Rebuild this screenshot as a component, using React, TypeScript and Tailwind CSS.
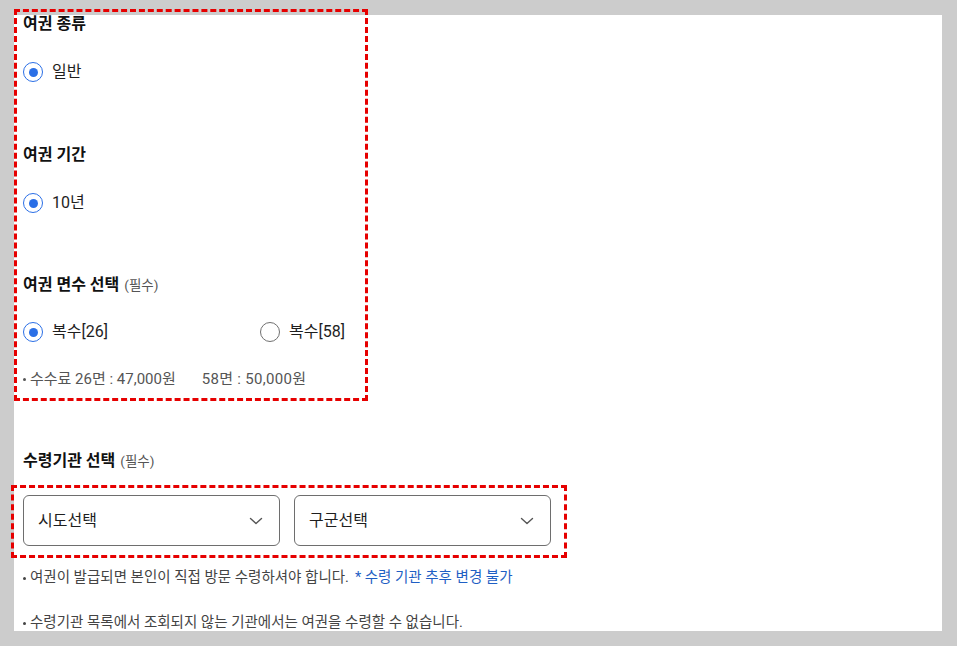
import React from "react";

function Radio({ checked, label }: { checked: boolean; label: string }) {
  return (
    <div className="flex h-[24px] items-center">
      {checked ? (
        <span className="flex h-[20px] w-[20px] items-center justify-center rounded-full border-[1.5px] border-[#2b6fe6] bg-white">
          <span className="h-[9px] w-[9px] rounded-full bg-[#2b6fe6]" />
        </span>
      ) : (
        <span className="h-[20px] w-[20px] rounded-full border-[1.5px] border-[#707070] bg-white" />
      )}
      <span className="ml-[9px] text-[16px] leading-[24px] text-[#1e1e1e]">{label}</span>
    </div>
  );
}

function Heading({ text, required }: { text: string; required?: boolean }) {
  return (
    <div className="flex h-[18px] items-center">
      <span className="text-[16px] font-bold leading-[22px] text-[#111]">{text}</span>
      {required && <span className="ml-[5px] text-[13.5px] leading-[22px] text-[#555]">(필수)</span>}
    </div>
  );
}

function Select({ label }: { label: string }) {
  return (
    <div className="flex h-[51px] w-[257px] items-center justify-between rounded-[6px] border border-[#6e6e6e] bg-white pl-[14px] pr-[16px]">
      <span className="text-[16px] text-[#1e1e1e]">{label}</span>
      <svg width="14" height="8" viewBox="0 0 14 8" fill="none">
        <path d="M1.5 1.5L7 6.5L12.5 1.5" stroke="#555" strokeWidth="1.4" strokeLinecap="round" strokeLinejoin="round" />
      </svg>
    </div>
  );
}

export default function App() {
  return (
    <div
      className="relative h-[646px] w-[957px] overflow-hidden bg-[#cccccc] pl-[14px] pt-[15px]"
      style={{ fontFamily: 'Roboto, "Noto Sans CJK KR", "Noto Sans", sans-serif' }}
    >
      <div className="flex h-[616px] w-[928px] flex-col overflow-hidden bg-white pl-[9px]">
        <Heading text="여권 종류" />
        <div className="mt-[27px]">
          <Radio checked label="일반" />
        </div>
        <div className="mt-[62px]">
          <Heading text="여권 기간" />
        </div>
        <div className="mt-[27px]">
          <Radio checked label="10년" />
        </div>
        <div className="mt-[61px]">
          <Heading text="여권 면수 선택" required />
        </div>
        <div className="mt-[26px] grid w-[474px] grid-cols-2">
          <Radio checked label="복수[26]" />
          <Radio checked={false} label="복수[58]" />
        </div>
        <div className="mt-[25px] flex h-[20px] items-center text-[15px] leading-[20px] text-[#555]">
          <span className="mr-[4px] h-[3px] w-[3px] rounded-full bg-[#555]" />
          <span>수수료 26면 : 47,000원</span>
          <span className="ml-[26px] tracking-[0.3px]">58면 : 50,000원</span>
        </div>
        <div className="mt-[63px]">
          <Heading text="수령기관 선택" required />
        </div>
        <div className="mt-[25px] flex gap-[14px]">
          <Select label="시도선택" />
          <Select label="구군선택" />
        </div>
        <div className="mt-[22px] flex h-[20px] items-center text-[14.5px] leading-[20px] text-[#444]">
          <span className="mr-[4px] h-[3px] w-[3px] rounded-full bg-[#444]" />
          <span>여권이 발급되면 본인이 직접 방문 수령하셔야 합니다.</span>
          <span className="ml-[6px] text-[#1f5fc4]">* 수령 기관 추후 변경 불가</span>
        </div>
        <div className="mt-[25px] flex h-[20px] items-center text-[14.5px] leading-[20px] text-[#444]">
          <span className="mr-[4px] h-[3px] w-[3px] rounded-full bg-[#444]" />
          <span>수령기관 목록에서 조회되지 않는 기관에서는 여권을 수령할 수 없습니다.</span>
        </div>
      </div>
      <div className="pointer-events-none absolute left-[14px] top-[9px] h-[392px] w-[354px] border-[3px] border-dashed border-[#e60000]" />
      <div className="pointer-events-none absolute left-[11px] top-[485px] h-[73px] w-[556px] border-[3px] border-dashed border-[#e60000]" />
    </div>
  );
}
